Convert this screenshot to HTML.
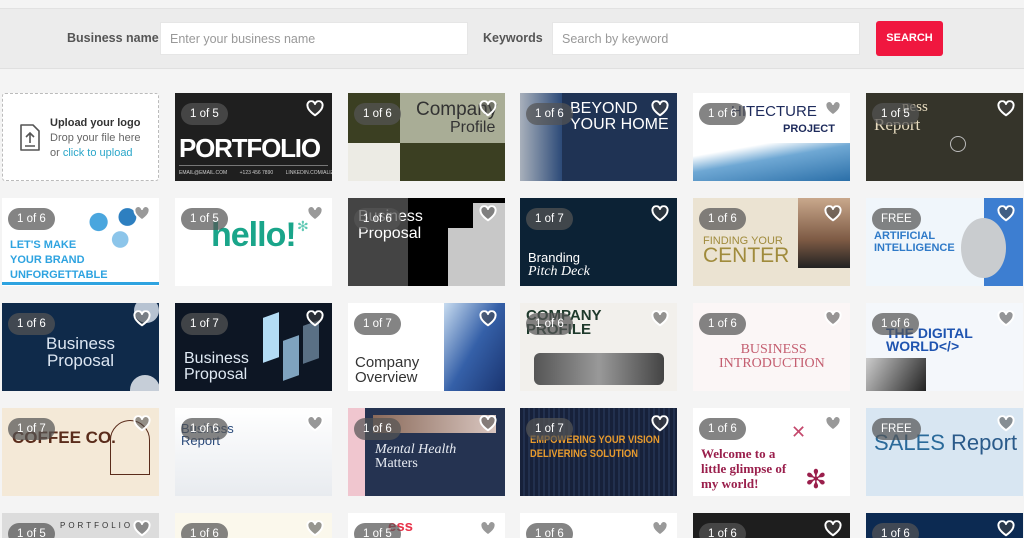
<!DOCTYPE html>
<html><head><meta charset="utf-8"><style>
*{box-sizing:border-box;margin:0;padding:0}
html,body{width:1024px;height:538px;overflow:hidden}
body{background:#f4f4f4;font-family:"Liberation Sans",sans-serif;position:relative}
.bar{position:absolute;left:0;top:8px;width:1024px;height:61px;background:#ececec;border-top:1px solid #e2e2e2;border-bottom:1px solid #e0e0e0}
.lbl{position:absolute;top:31px;font-size:12.5px;font-weight:bold;color:#555}
.inp{position:absolute;top:22px;height:33px;background:#fff;border:1px solid #e6e6e6;font-size:12.5px;color:#999;padding:9px 9px}
.btn{position:absolute;left:876px;top:21px;width:67px;height:35px;background:#f0173f;border-radius:3px;color:#fff;font-size:11px;font-weight:bold;text-align:center;line-height:35px}
.c{position:absolute;width:157px;height:88px;overflow:hidden}
.b{position:absolute;height:22px;padding:0 9px;border-radius:11px;background:rgba(85,85,85,.72);color:#fff;font-size:11.5px;line-height:22px;z-index:5}
.h{position:absolute;width:18px;height:17px;z-index:5}
.t{position:absolute;white-space:nowrap}
</style></head><body>
<div class="bar"></div>
<div class="lbl" style="left:67px">Business name</div>
<div class="inp" style="left:160px;width:308px">Enter your business name</div>
<div class="lbl" style="left:483px">Keywords</div>
<div class="inp" style="left:552px;width:308px">Search by keyword</div>
<div class="btn">SEARCH</div>

<div class="c" style="left:2px;top:93px;background:#fff;border:1px dashed #bbb;border-radius:3px">
<svg style="position:absolute;left:16px;top:30px" width="22" height="28" viewBox="0 0 22 28"><path d="M2 1h12l6 6v19H2z" fill="none" stroke="#555" stroke-width="1.6" stroke-linejoin="round"/><path d="M11 19V9M7 13l4-4 4 4M6 22h10" fill="none" stroke="#555" stroke-width="1.6"/></svg>
<div class="t" style="left:47px;top:23px;font-size:11px;font-weight:bold;color:#333">Upload your logo</div>
<div class="t" style="left:47px;top:38px;font-size:11px;color:#666">Drop your file here</div>
<div class="t" style="left:47px;top:53px;font-size:11px;color:#666">or <span style="color:#2aa6c9">click to upload</span></div>
</div>

<div class="c" style="left:175px;top:93px;background:#1f1f1f">
<div class="t" style="left:4px;top:40px;font-size:26px;font-weight:bold;color:#fff;letter-spacing:-1.2px">PORTFOLIO</div>
<div style="position:absolute;left:4px;top:72px;width:149px;height:1px;background:#777"></div>
<div class="t" style="left:4px;top:77px;font-size:5px;color:#ccc">EMAIL@EMAIL.COM &nbsp; &nbsp; &nbsp; &nbsp; +123 456 7890 &nbsp; &nbsp; &nbsp; &nbsp; LINKEDIN.COM/ALIZEE</div>
</div>
<div class="c" style="left:348px;top:93px;background:#3b3f22">
<div style="position:absolute;left:52px;top:0;width:105px;height:50px;background:#a9ad96"></div>
<div style="position:absolute;left:0;top:50px;width:52px;height:38px;background:#ecebe4"></div>
<div class="t" style="left:68px;top:6px;font-size:19px;color:#333">Company</div>
<div class="t" style="left:102px;top:26px;font-size:16px;color:#333">Profile</div>
</div>
<div class="c" style="left:520px;top:93px;background:#1f3354">
<div style="position:absolute;left:0;top:0;width:42px;height:88px;background:linear-gradient(90deg,#a8b0bb,#2c4a78)"></div>
<div class="t" style="left:50px;top:8px;font-size:16px;color:#fff;line-height:16px">BEYOND<br>YOUR HOME</div>
</div>
<div class="c" style="left:693px;top:93px;background:#fff">
<div class="t" style="left:38px;top:10px;font-size:15px;color:#1d2a5b">HITECTURE</div>
<div class="t" style="left:90px;top:30px;font-size:11px;font-weight:bold;color:#1d2a5b">PROJECT</div>
<div style="position:absolute;left:0;top:50px;width:157px;height:38px;background:linear-gradient(170deg,#fff 20%,#6fa8d4 45%,#2b6fa8)"></div>
</div>
<div class="c" style="left:866px;top:93px;background:#35342a">
<div class="t" style="left:36px;top:6px;font-size:15px;color:#e8dcc0;font-family:'Liberation Serif',serif">ness</div>
<div class="t" style="left:8px;top:22px;font-size:17px;color:#e8dcc0;font-family:'Liberation Serif',serif">Report</div>
<div style="position:absolute;left:84px;top:43px;width:16px;height:16px;border:1px solid #bbb;border-radius:50%"></div>
</div>

<div class="c" style="left:2px;top:198px;background:#fff">
<div style="position:absolute;left:75px;top:4px;width:72px;height:50px;background:radial-gradient(circle at 30% 40%,#4aa6de 15%,transparent 16%),radial-gradient(circle at 70% 30%,#2d7fc0 14%,transparent 15%),radial-gradient(circle at 60% 75%,#8cc5ea 14%,transparent 15%)"></div>
<div class="t" style="left:8px;top:40px;font-size:11px;font-weight:bold;color:#2ea3e0;line-height:15px">LET'S MAKE<br>YOUR BRAND<br>UNFORGETTABLE</div>
<div style="position:absolute;left:0;top:84px;width:157px;height:3px;background:#2ea3e0"></div>
</div>
<div class="c" style="left:175px;top:198px;background:#fff">
<div class="t" style="left:36px;top:18px;font-size:34px;font-weight:bold;color:#1aa58a;letter-spacing:-1px">hello!</div>
<div class="t" style="left:122px;top:20px;font-size:14px;color:#5fc9b4">✻</div>
</div>
<div class="c" style="left:348px;top:198px;background:#000">
<div style="position:absolute;left:0;top:0;width:60px;height:88px;background:#444"></div>
<div style="position:absolute;left:100px;top:30px;width:57px;height:58px;background:#c8c8c8"></div>
<div style="position:absolute;left:125px;top:5px;width:32px;height:25px;background:#c8c8c8"></div>
<div class="t" style="left:10px;top:10px;font-size:16px;color:#fff;line-height:17px">Business<br>Proposal</div>
</div>
<div class="c" style="left:520px;top:198px;background:#0c2235">
<div class="t" style="left:8px;top:52px;font-size:13px;color:#fff">Branding</div>
<div class="t" style="left:8px;top:66px;font-size:14px;color:#fff;font-style:italic;font-family:'Liberation Serif',serif">Pitch Deck</div>
</div>
<div class="c" style="left:693px;top:198px;background:#ebe3d2">
<div style="position:absolute;left:105px;top:0;width:52px;height:70px;background:linear-gradient(#c9a88c,#7d5a44 60%,#222)"></div>
<div class="t" style="left:10px;top:37px;font-size:11px;color:#a08b3c">FINDING YOUR</div>
<div class="t" style="left:10px;top:46px;font-size:21px;color:#a08b3c">CENTER</div>
</div>
<div class="c" style="left:866px;top:198px;background:#f0f6fb">
<div style="position:absolute;left:118px;top:0;width:39px;height:88px;background:#3d7ed1"></div>
<div style="position:absolute;left:95px;top:20px;width:45px;height:60px;border-radius:50%;background:#c9cccf"></div>
<div class="t" style="left:8px;top:32px;font-size:11px;font-weight:bold;color:#2f7ac8;line-height:12px">ARTIFICIAL<br>INTELLIGENCE</div>
</div>

<div class="c" style="left:2px;top:303px;background:#0f2a4a">
<div style="position:absolute;left:132px;top:-5px;width:25px;height:25px;border-radius:50%;background:#b7c3d2"></div>
<div style="position:absolute;left:128px;top:72px;width:30px;height:30px;border-radius:50%;background:#c6ced8"></div>
<div class="t" style="left:44px;top:32px;font-size:17px;color:#dce6f2;line-height:17px;text-align:center">Business<br>Proposal</div>
</div>
<div class="c" style="left:175px;top:303px;background:#0d1624">
<div style="position:absolute;left:88px;top:12px;width:16px;height:45px;background:#b3dcf5;transform:skewY(-20deg)"></div>
<div style="position:absolute;left:108px;top:35px;width:16px;height:40px;background:#7fa3bf;transform:skewY(-20deg)"></div>
<div style="position:absolute;left:128px;top:20px;width:16px;height:38px;background:#5a7085;transform:skewY(-20deg)"></div>
<div class="t" style="left:9px;top:48px;font-size:16px;color:#dfe9f3;line-height:16px">Business<br>Proposal</div>
</div>
<div class="c" style="left:348px;top:303px;background:#fff">
<div style="position:absolute;left:96px;top:0;width:61px;height:88px;background:linear-gradient(120deg,#c8dcf0,#3560a8 50%,#1a3470)"></div>
<div class="t" style="left:7px;top:52px;font-size:15px;color:#333;line-height:15px">Company<br>Overview</div>
</div>
<div class="c" style="left:520px;top:303px;background:#f2f0ec">
<div class="t" style="left:6px;top:6px;font-size:15px;font-weight:bold;color:#1f3a2c;line-height:14px">COMPANY<br>PROFILE</div>
<div style="position:absolute;left:14px;top:50px;width:130px;height:32px;border-radius:6px;background:linear-gradient(90deg,#555,#999,#444)"></div>
</div>
<div class="c" style="left:693px;top:303px;background:#fbf6f6">
<div class="t" style="left:26px;top:40px;font-size:14px;color:#c45e70;font-family:'Liberation Serif',serif;text-align:center;line-height:14px">&nbsp;BUSINESS<br>INTRODUCTION</div>
</div>
<div class="c" style="left:866px;top:303px;background:#f4f7fb">
<div class="t" style="left:20px;top:24px;font-size:14px;font-weight:bold;color:#1f54b0;line-height:13px">THE DIGITAL<br>WORLD&lt;/&gt;</div>
<div style="position:absolute;left:0;top:55px;width:60px;height:33px;background:linear-gradient(120deg,#ccc,#222)"></div>
</div>

<div class="c" style="left:2px;top:408px;background:#f4e9d7">
<div class="t" style="left:10px;top:20px;font-size:17px;font-weight:bold;color:#5a2c1b">COFFEE CO.</div>
<div style="position:absolute;left:108px;top:12px;width:40px;height:55px;border:1px solid #5a2c1b;border-radius:20px 20px 0 0"></div>
</div>
<div class="c" style="left:175px;top:408px;background:linear-gradient(#fff,#e8ebef)">
<div class="t" style="left:6px;top:15px;font-size:13px;color:#2a4a7a;line-height:12px">Business<br>Report</div>
</div>
<div class="c" style="left:348px;top:408px;background:#253351">
<div style="position:absolute;left:0;top:0;width:17px;height:88px;background:#f0c6cf"></div>
<div style="position:absolute;left:25px;top:7px;width:123px;height:18px;background:linear-gradient(90deg,#8a6a5a,#d9c6c0)"></div>
<div class="t" style="left:27px;top:35px;font-size:14px;color:#e8ecf3;font-style:italic;font-family:'Liberation Serif',serif;line-height:14px">Mental Health<br><span style="font-style:normal">Matters</span></div>
</div>
<div class="c" style="left:520px;top:408px;background:repeating-linear-gradient(90deg,#17213a 0 3px,#22304e 3px 5px)">
<div class="t" style="left:10px;top:25px;font-size:11px;font-weight:bold;color:#e89b2e;line-height:14px;transform:scaleX(.85);transform-origin:left">EMPOWERING YOUR VISION<br>DELIVERING SOLUTION</div>
</div>
<div class="c" style="left:693px;top:408px;background:#fff">
<div class="t" style="left:8px;top:38px;font-size:13px;font-weight:bold;color:#9a1f4c;font-family:'Liberation Serif',serif;line-height:15px">Welcome to a<br>little glimpse of<br>my world!</div>
<div class="t" style="left:98px;top:14px;font-size:18px;color:#c4486c">✕</div>
<div class="t" style="left:112px;top:56px;font-size:26px;color:#9a1f4c">✻</div>
</div>
<div class="c" style="left:866px;top:408px;background:#d8e6f2">
<div class="t" style="left:8px;top:22px;font-size:22px;color:#2a6a9a">SALES <span style="color:#2a5a8a">Report</span></div>
</div>

<div class="c" style="left:2px;top:513px;background:#dcdcdc"><div class="t" style="left:58px;top:8px;font-size:8px;letter-spacing:3px;color:#333">PORTFOLIO</div></div>
<div class="c" style="left:175px;top:513px;background:#fbf8ec"></div>
<div class="c" style="left:348px;top:513px;background:#fff"><div class="t" style="left:40px;top:5px;font-size:15px;font-weight:bold;color:#e8334a">ess</div></div>
<div class="c" style="left:520px;top:513px;background:#fff"></div>
<div class="c" style="left:693px;top:513px;background:#1e1e1e"></div>
<div class="c" style="left:866px;top:513px;background:#0c2a52"></div>

<svg width="0" height="0" style="position:absolute"><defs><symbol id="ht" viewBox="0 0 24 22"><path d="M12 20S2 13.5 2 7.5A5 5 0 0 1 12 5a5 5 0 0 1 10 2.5C22 13.5 12 20 12 20z" fill="rgba(70,70,70,.55)" stroke="#fff" stroke-width="2.6" stroke-linejoin="round"/></symbol></defs></svg>

<div id="badges"></div>
<script>
var cy=[93,198,303,408,513],xs=[2,175,348,520,693,866];
var L=[[null,"1 of 5","1 of 6","1 of 6","1 of 6","1 of 5"],["1 of 6","1 of 5","1 of 6","1 of 7","1 of 6","FREE"],["1 of 6","1 of 7","1 of 7","1 of 6","1 of 6","1 of 6"],["1 of 7","1 of 6","1 of 6","1 of 7","1 of 6","FREE"],["1 of 5","1 of 6","1 of 5","1 of 6","1 of 6","1 of 6"]];
var h="";
for(var r=0;r<5;r++){for(var c=0;c<6;c++){var lab=L[r][c];if(!lab)continue;var x=xs[c],y=cy[r];
h+='<div class="b" style="left:'+(x+6)+'px;top:'+(y+10)+'px">'+lab+'</div><svg class="h" style="left:'+(x+131)+'px;top:'+(y+7)+'px" viewBox="0 0 24 22"><use href="#ht"/></svg>';}}
document.getElementById("badges").innerHTML=h;
</script>
</body></html>
